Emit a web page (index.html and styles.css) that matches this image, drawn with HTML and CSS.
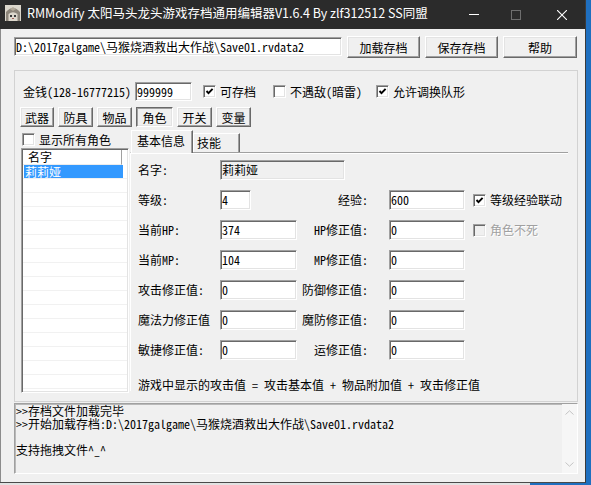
FILE: index.html
```html
<!DOCTYPE html>
<html lang="zh-CN">
<head>
<meta charset="utf-8">
<title>RMModify</title>
<link rel="stylesheet" href="styles.css">
</head>
<body>
<div class="window">
  <div class="titlebar">
    <div class="app-icon">
      <svg width="16" height="16" viewBox="0 0 16 16">
        <rect width="16" height="16" fill="#dcd7cc"/>
        <path d="M1 16 V7 Q8 -1 15 7 V16 H12.5 V9 Q8 5.5 3.5 9 V16 Z" fill="#8d867b"/>
        <path d="M5 4 L8 2 L11 4 L8 6 Z" fill="#b3aa9a"/>
        <rect x="5" y="10" width="2" height="2" fill="#3a3a3a"/>
        <rect x="9" y="10" width="2" height="2" fill="#3a3a3a"/>
        <rect x="7" y="13" width="2" height="1" fill="#a0605a"/>
      </svg>
    </div>
    <div class="title">RMModify 太阳马头龙头游戏存档通用编辑器V1.6.4 By zlf312512 SS同盟</div>
    <div class="controls">
      <div class="ctl ctl-min"><svg width="10" height="1" viewBox="0 0 10 1"><rect width="10" height="1" fill="#ffffff"/></svg></div>
      <div class="ctl"><svg width="10" height="10" viewBox="0 0 10 10"><rect x="0.5" y="0.5" width="9" height="9" fill="none" stroke="#6e6e6e"/></svg></div>
      <div class="ctl"><svg width="10" height="10" viewBox="0 0 10 10"><path d="M0 0 L10 10 M10 0 L0 10" stroke="#ffffff" stroke-width="1.1"/></svg></div>
    </div>
  </div>

  <div class="client">
    <div class="path-row">
      <div class="tb path">D:\2017galgame\马猴烧酒救出大作战\Save01.rvdata2</div>
      <button class="btn btn-top">加载存档</button>
      <button class="btn btn-top">保存存档</button>
      <button class="btn btn-top btn-help">帮助</button>
    </div>

    <div class="group">
      <div class="money-row">
        <span class="money-label">金钱(128-16777215)</span>
        <div class="tb money-input">999999</div>
        <label class="chk c1"><span class="cb"><svg width="9" height="9" viewBox="0 0 9 9"><path d="M1.5 4 L3.5 6.2 L7.6 1.8" fill="none" stroke="#000" stroke-width="1.9"/></svg></span><span class="chk-text">可存档</span></label>
        <label class="chk c2"><span class="cb"></span><span class="chk-text">不遇敌(暗雷)</span></label>
        <label class="chk c3"><span class="cb"><svg width="9" height="9" viewBox="0 0 9 9"><path d="M1.5 4 L3.5 6.2 L7.6 1.8" fill="none" stroke="#000" stroke-width="1.9"/></svg></span><span class="chk-text">允许调换队形</span></label>
      </div>

      <div class="tabbtns">
        <button class="btn w34">武器</button>
        <button class="btn w35">防具</button>
        <button class="btn w35">物品</button>
        <button class="btn w37 pressed">角色</button>
        <button class="btn w35">开关</button>
        <button class="btn w35">变量</button>
      </div>

      <div class="lower">
        <div class="left-col">
          <label class="chk show-all"><span class="cb"></span><span class="chk-text">显示所有角色</span></label>
          <div class="list">
            <div class="list-head"><div class="head-cell">名字</div></div>
            <div class="row sel"><div class="cell">莉莉娅</div></div>
            <div class="row"><div class="cell"></div></div>
            <div class="row"><div class="cell"></div></div>
            <div class="row"><div class="cell"></div></div>
            <div class="row"><div class="cell"></div></div>
            <div class="row"><div class="cell"></div></div>
            <div class="row"><div class="cell"></div></div>
            <div class="row"><div class="cell"></div></div>
            <div class="row"><div class="cell"></div></div>
            <div class="row"><div class="cell"></div></div>
            <div class="row"><div class="cell"></div></div>
            <div class="row"><div class="cell"></div></div>
            <div class="row"><div class="cell"></div></div>
            <div class="row"><div class="cell"></div></div>
            <div class="row"><div class="cell"></div></div>
            <div class="row"><div class="cell"></div></div>
            <div class="row"><div class="cell"></div></div>
            <div class="row"><div class="cell"></div></div>
          </div>
        </div>

        <div class="right-col">
          <div class="tabs">
            <div class="tab active">基本信息</div>
            <div class="tab">技能</div>
          </div>
          <div class="panel">
            <div class="form">
              <span class="lbl">名字:</span>
              <div class="tb in readonly name-in">莉莉娅</div>

              <span class="lbl">等级:</span>
              <div class="tb in lv-in">4</div>
              <span class="lbl r">经验:</span>
              <div class="tb in">600</div>
              <label class="chk f-chk"><span class="cb"><svg width="9" height="9" viewBox="0 0 9 9"><path d="M1.5 4 L3.5 6.2 L7.6 1.8" fill="none" stroke="#000" stroke-width="1.9"/></svg></span><span class="chk-text">等级经验联动</span></label>

              <span class="lbl">当前HP:</span>
              <div class="tb in">374</div>
              <span class="lbl r">HP修正值:</span>
              <div class="tb in">0</div>
              <label class="chk f-chk disabled"><span class="cb"></span><span class="chk-text">角色不死</span></label>

              <span class="lbl">当前MP:</span>
              <div class="tb in">104</div>
              <span class="lbl r">MP修正值:</span>
              <div class="tb in">0</div>
              <span class="spacer"></span>

              <span class="lbl">攻击修正值:</span>
              <div class="tb in">0</div>
              <span class="lbl r">防御修正值:</span>
              <div class="tb in">0</div>
              <span class="spacer"></span>

              <span class="lbl">魔法力修正值</span>
              <div class="tb in">0</div>
              <span class="lbl r">魔防修正值:</span>
              <div class="tb in">0</div>
              <span class="spacer"></span>

              <span class="lbl">敏捷修正值:</span>
              <div class="tb in">0</div>
              <span class="lbl r">运修正值:</span>
              <div class="tb in">0</div>
              <span class="spacer"></span>
            </div>
            <div class="note">游戏中显示的攻击值 = 攻击基本值 + 物品附加值 + 攻击修正值</div>
          </div>
        </div>
      </div>
    </div>

    <div class="log">
      <div class="log-text">
        <div class="line">&gt;&gt;存档文件加载完毕</div>
        <div class="line">&gt;&gt;开始加载存档:D:\2017galgame\马猴烧酒救出大作战\Save01.rvdata2</div>
        <div class="line"> </div>
        <div class="line">支持拖拽文件^_^</div>
      </div>
      <div class="vscroll">
        <div class="arrow"><svg width="9" height="5" viewBox="0 0 9 5"><path d="M0.5 4.5 L4.5 0.8 L8.5 4.5" fill="none" stroke="#c4c4c4"/></svg></div>
        <div class="arrow"><svg width="9" height="5" viewBox="0 0 9 5"><path d="M0.5 0.5 L4.5 4.2 L8.5 0.5" fill="none" stroke="#c4c4c4"/></svg></div>
      </div>
    </div>
  </div>
</div>
<div class="desk"></div>
</body>
</html>
```

FILE: styles.css
```css
* { box-sizing: border-box; }
html, body { margin: 0; padding: 0; }
body {
  width: 591px;
  height: 485px;
  overflow: hidden;
  background: #1f6fbf;
  font-family: "Noto Sans Mono CJK SC", "Noto Sans CJK SC", "Liberation Sans", sans-serif;
  font-size: 12px;
  color: #000;
}

.window {
  width: 586px;
  height: 483px;
  background: #f0f0f0;
  border-right: 1px solid #3a3a3a;
  border-bottom: 1px solid #4a4a4a;
  display: flex;
  flex-direction: column;
}
.desk {
  height: 2px;
  background: linear-gradient(to right, #e2e2e2 0, #e2e2e2 530px, #1f6fbf 530px);
}

/* title bar */
.titlebar {
  height: 29px;
  flex: none;
  background: #2b2b2b;
  color: #fff;
  display: flex;
  align-items: flex-start;
}
.app-icon { width: 16px; height: 16px; margin: 5px 0 0 5px; }
.app-icon svg { display: block; }
.title {
  margin: 5px 0 0 6px;
  font-family: "Noto Sans CJK SC", "Noto Sans", sans-serif;
  font-size: 12.5px;
  line-height: 16px;
  white-space: nowrap;
}
.controls { margin-left: auto; display: flex; height: 29px; }
.ctl {
  width: 46px;
  height: 29px;
  display: flex;
  align-items: center;
  justify-content: center;
}
.ctl svg { display: block; }
.ctl-min { padding-left: 8px; }

/* client */
.client {
  flex: 1;
  border-left: 1px solid #8c8c8c;
  padding: 7px 0 0 13px;
}

.tb {
  background: #fff;
  border: 1px solid;
  border-color: #a0a0a0 #ffffff #ffffff #a0a0a0;
  box-shadow: inset 1px 1px 0 #696969, inset -1px -1px 0 #e3e3e3;
  padding: 0 0 0 1px;
  white-space: nowrap;
  overflow: hidden;
}
.tb.readonly { background: #f0f0f0; }

.path-row { display: flex; align-items: flex-start; }
.path { width: 328px; height: 19px; margin-top: 1px; line-height: 17px; }

.btn {
  font: inherit;
  color: #000;
  background: #f0f0f0;
  border: 1px solid;
  border-color: #ffffff #696969 #696969 #ffffff;
  box-shadow: inset -1px -1px 0 #a0a0a0, inset 1px 1px 0 #e3e3e3;
  padding: 0;
  margin: 0;
  white-space: nowrap;
}
.btn-top { width: 73px; height: 22px; margin-left: 5px; line-height: 19px; }
.btn-help { width: 74px; }

/* group */
.group {
  margin-top: 12px;
  width: 564px;
  height: 332px;
  border: 1px solid #d2d2d2;
  padding: 11px 0 0 5px;
}
.money-row { display: flex; align-items: center; height: 19px; }
.money-label { margin-left: 3px; width: 112px; white-space: nowrap; }
.money-input { width: 57px; height: 19px; line-height: 17px; }

.chk { display: flex; align-items: center; white-space: nowrap; }
.cb {
  width: 13px;
  height: 13px;
  flex: none;
  background: #fff;
  border: 1px solid;
  border-color: #a0a0a0 #ffffff #ffffff #a0a0a0;
  box-shadow: inset 1px 1px 0 #696969, inset -1px -1px 0 #e3e3e3;
  display: flex;
  align-items: center;
  justify-content: center;
}
.cb svg { display: block; }
.chk-text { margin-left: 4px; line-height: 14px; }
.c1 { margin-left: 11px; }
.c2 { margin-left: 17px; }
.c3 { margin-left: 14px; }

.tabbtns { display: flex; margin-top: 6px; height: 20px; gap: 4px; }
.tabbtns .btn { height: 20px; line-height: 17px; }
.w34 { width: 34px; }
.w35 { width: 35px; }
.w37 { width: 37px; }
.btn.pressed {
  border-color: #696969 #ffffff #ffffff #696969;
  box-shadow: inset 1px 1px 0 #a0a0a0, inset -1px -1px 0 #e3e3e3;
}

.lower { display: flex; margin-top: 2px; }
.left-col { width: 110px; flex: none; }
.show-all { margin: 4px 0 0 2px; height: 13px; }
.list {
  margin: 2px 0 0 1px;
  width: 108px;
  height: 245px;
  background: #fff;
  border: 1px solid;
  border-color: #a0a0a0 #ffffff #ffffff #a0a0a0;
  box-shadow: inset 1px 1px 0 #696969, inset -1px -1px 0 #e3e3e3;
  padding: 1px;
  overflow: hidden;
}
.list-head { height: 15px; display: flex; }
.head-cell {
  width: 99px;
  border-right: 1px solid #a0a0a0;
  border-bottom: 1px solid #ececec;
  padding-left: 5px;
  line-height: 13px;
}
.row { height: 14px; border-bottom: 1px solid #f1f1f1; display: flex; }
.cell { width: 99px; margin-left: 1px; line-height: 13px; padding-left: 1px; }
.row.sel .cell { background: #3399ff; color: #fff; }

.right-col { width: 438px; flex: none; }
.tabs { display: flex; align-items: flex-end; height: 22px; margin-top: 1px; }
.tab {
  height: 19px;
  border-top: 1px solid #ffffff;
  border-left: 1px solid #ffffff;
  border-right: 1px solid #696969;
  box-shadow: inset -1px 0 0 #a0a0a0;
  line-height: 17px;
  padding: 0 0 0 3px;
  width: 47px;
  white-space: nowrap;
}
.tab.active {
  height: 23px;
  width: 62px;
  margin-left: 1px;
  margin-bottom: -1px;
  padding-left: 5px;
  line-height: 20px;
  background: #f0f0f0;
  position: relative;
  z-index: 1;
}
.panel {
  width: 438px;
  border-top: 1px solid #a0a0a0;
  border-left: 1px solid #ffffff;
  box-shadow: inset 0 1px 0 #ffffff;
  padding: 7px 0 0 7px;
}
.form {
  display: grid;
  grid-template-columns: 82px 77px 92px 76px auto;
  grid-auto-rows: 20px;
  row-gap: 10px;
  align-items: center;
}
.lbl { white-space: nowrap; line-height: 14px; }
.lbl.r { text-align: right; padding-right: 21px; }
.in { height: 20px; line-height: 18px; }
.name-in { grid-column: 2 / span 4; width: 125px; }
.lv-in { width: 31px; }
.f-chk { margin-left: 8px; }
.chk.disabled .cb { background: #f0f0f0; }
.chk.disabled .chk-text { color: #a0a0a0; text-shadow: 1px 1px 0 #ffffff; }
.note { margin-top: 19px; line-height: 12px; white-space: pre; }

/* log */
.log {
  margin-top: 1px;
  width: 564px;
  height: 71px;
  border: 1px solid;
  border-color: #a0a0a0 #ffffff #ffffff #a0a0a0;
  box-shadow: inset 1px 1px 0 #b9b9b9;
  display: flex;
}
.log-text { flex: 1; padding: 0 0 0 1px; }
.line { height: 13px; line-height: 13px; white-space: pre; }
.vscroll {
  width: 15px;
  flex: none;
  background: #f6f6f6;
  display: flex;
  flex-direction: column;
  justify-content: space-between;
}
.arrow { height: 17px; display: flex; align-items: center; justify-content: center; }
.arrow svg { display: block; }
```
